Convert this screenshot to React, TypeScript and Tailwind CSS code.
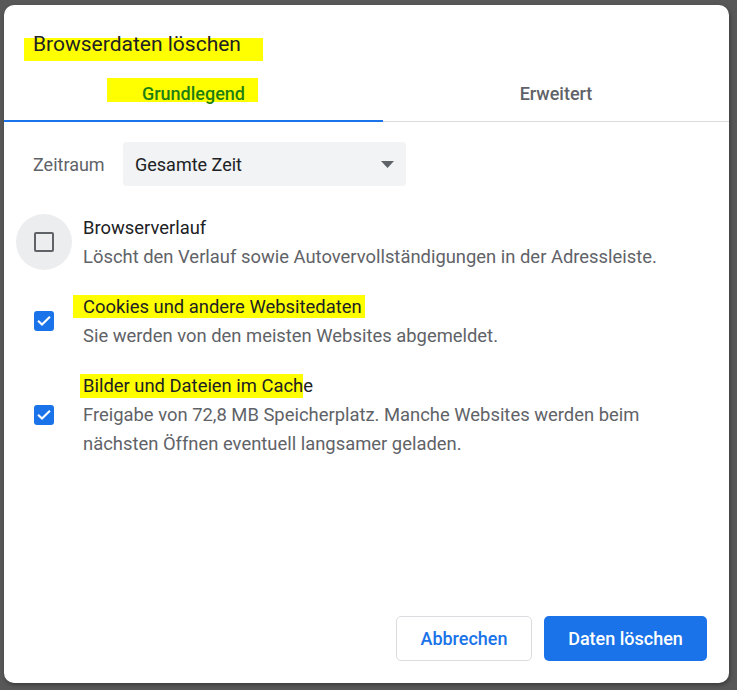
import React from "react";

function Mark({
  children,
  className,
}: {
  children: React.ReactNode;
  className: string;
}) {
  // yellow marker stroke behind the text
  return (
    <span className="relative inline-block">
      <span className={`absolute bg-[#ffff00] ${className}`} />
      <span className="relative">{children}</span>
    </span>
  );
}

function Checked() {
  return (
    <span className="flex h-[20px] w-[20px] items-center justify-center rounded-[3px] bg-[#1a73e8]">
      <svg viewBox="0 0 20 20" className="h-[16px] w-[16px]" fill="none">
        <path
          d="M3.5 10.5l4 4L16.5 5.5"
          stroke="white"
          strokeWidth="2.6"
          strokeLinecap="square"
        />
      </svg>
    </span>
  );
}

function Row({
  box,
  title,
  lines,
}: {
  box: React.ReactNode;
  title: React.ReactNode;
  lines: string[];
}) {
  return (
    <div className="flex items-center">
      <div className="flex w-[56px] justify-center">{box}</div>
      <div className="ml-[11px] text-[18.4px] leading-[29px]">
        <div className="text-[#202124]">{title}</div>
        {lines.map((l) => (
          <div key={l} className="text-[#5f6368]">
            {l}
          </div>
        ))}
      </div>
    </div>
  );
}

export default function App() {
  return (
    <div className="h-[690px] w-[737px] bg-[#585858] pb-[7px] pl-[4px] pr-[8px] pt-[5px] font-['Roboto',sans-serif]">
      <div className="flex h-full w-full flex-col rounded-[10px] bg-white shadow-[1px_2px_4px_rgba(0,0,0,0.35)]">
        <h1 className="pl-[29px] pt-[25px] text-[21px] leading-[28px] font-normal text-[#202124]">
          <Mark className="-left-[9px] -right-[22px] top-[8px] -bottom-[3px]">
            Browserdaten löschen
          </Mark>
        </h1>

        <div className="mt-[16px] flex border-b border-[#dadce0]">
          <div className="-mb-px flex h-[48px] w-[379px] items-start justify-center border-b-2 border-[#1a73e8] pt-[8px] text-[18px] leading-[24px] font-medium text-[#1f7f12]">
            <Mark className="-left-[35px] -right-[13px] -top-[4px] -bottom-[-4px]">
              Grundlegend
            </Mark>
          </div>
          <div className="flex h-[47px] flex-1 justify-center pt-[8px] text-[18px] leading-[24px] font-medium text-[#5f6368]">
            Erweitert
          </div>
        </div>

        <div className="mt-[20px] flex items-center pl-[29px]">
          <span className="w-[90px] text-[18px] text-[#5f6368]">Zeitraum</span>
          <div className="flex h-[44px] w-[283px] items-center justify-between rounded-[4px] bg-[#f1f3f4] px-[12px]">
            <span className="text-[18px] text-[#202124]">Gesamte Zeit</span>
            <svg width="13" height="7" viewBox="0 0 13 7">
              <path d="M0 0h13L6.5 7z" fill="#5f6368" />
            </svg>
          </div>
        </div>

        <div className="mt-[27px] flex flex-col gap-[21px] pl-[12px]">
          <Row
            box={
              <span className="flex h-[56px] w-[56px] items-center justify-center rounded-full bg-[#ebedef]">
                <span className="h-[20px] w-[20px] rounded-[2px] border-2 border-[#5f6368]" />
              </span>
            }
            title="Browserverlauf"
            lines={[
              "Löscht den Verlauf sowie Autovervollständigungen in der Adressleiste.",
            ]}
          />
          <Row
            box={<Checked />}
            title={
              <Mark className="-left-[10px] -right-[3px] top-[3px] bottom-[3px]">
                Cookies und andere Websitedaten
              </Mark>
            }
            lines={["Sie werden von den meisten Websites abgemeldet."]}
          />
          <Row
            box={<Checked />}
            title={
              <>
                <Mark className="-left-[3px] right-0 top-[3px] bottom-[2px]">
                  Bilder und Dateien im Cach
                </Mark>
                e
              </>
            }
            lines={[
              "Freigabe von 72,8 MB Speicherplatz. Manche Websites werden beim",
              "nächsten Öffnen eventuell langsamer geladen.",
            ]}
          />
        </div>

        <div className="mt-auto flex justify-end gap-[12px] pb-[22px] pr-[22px]">
          <button className="h-[45px] w-[136px] rounded-[5px] border border-[#dadce0] bg-white text-[18px] font-medium text-[#1a73e8]">
            Abbrechen
          </button>
          <button className="h-[45px] w-[163px] rounded-[5px] bg-[#1a73e8] text-[18px] font-medium text-white">
            Daten löschen
          </button>
        </div>
      </div>
    </div>
  );
}
